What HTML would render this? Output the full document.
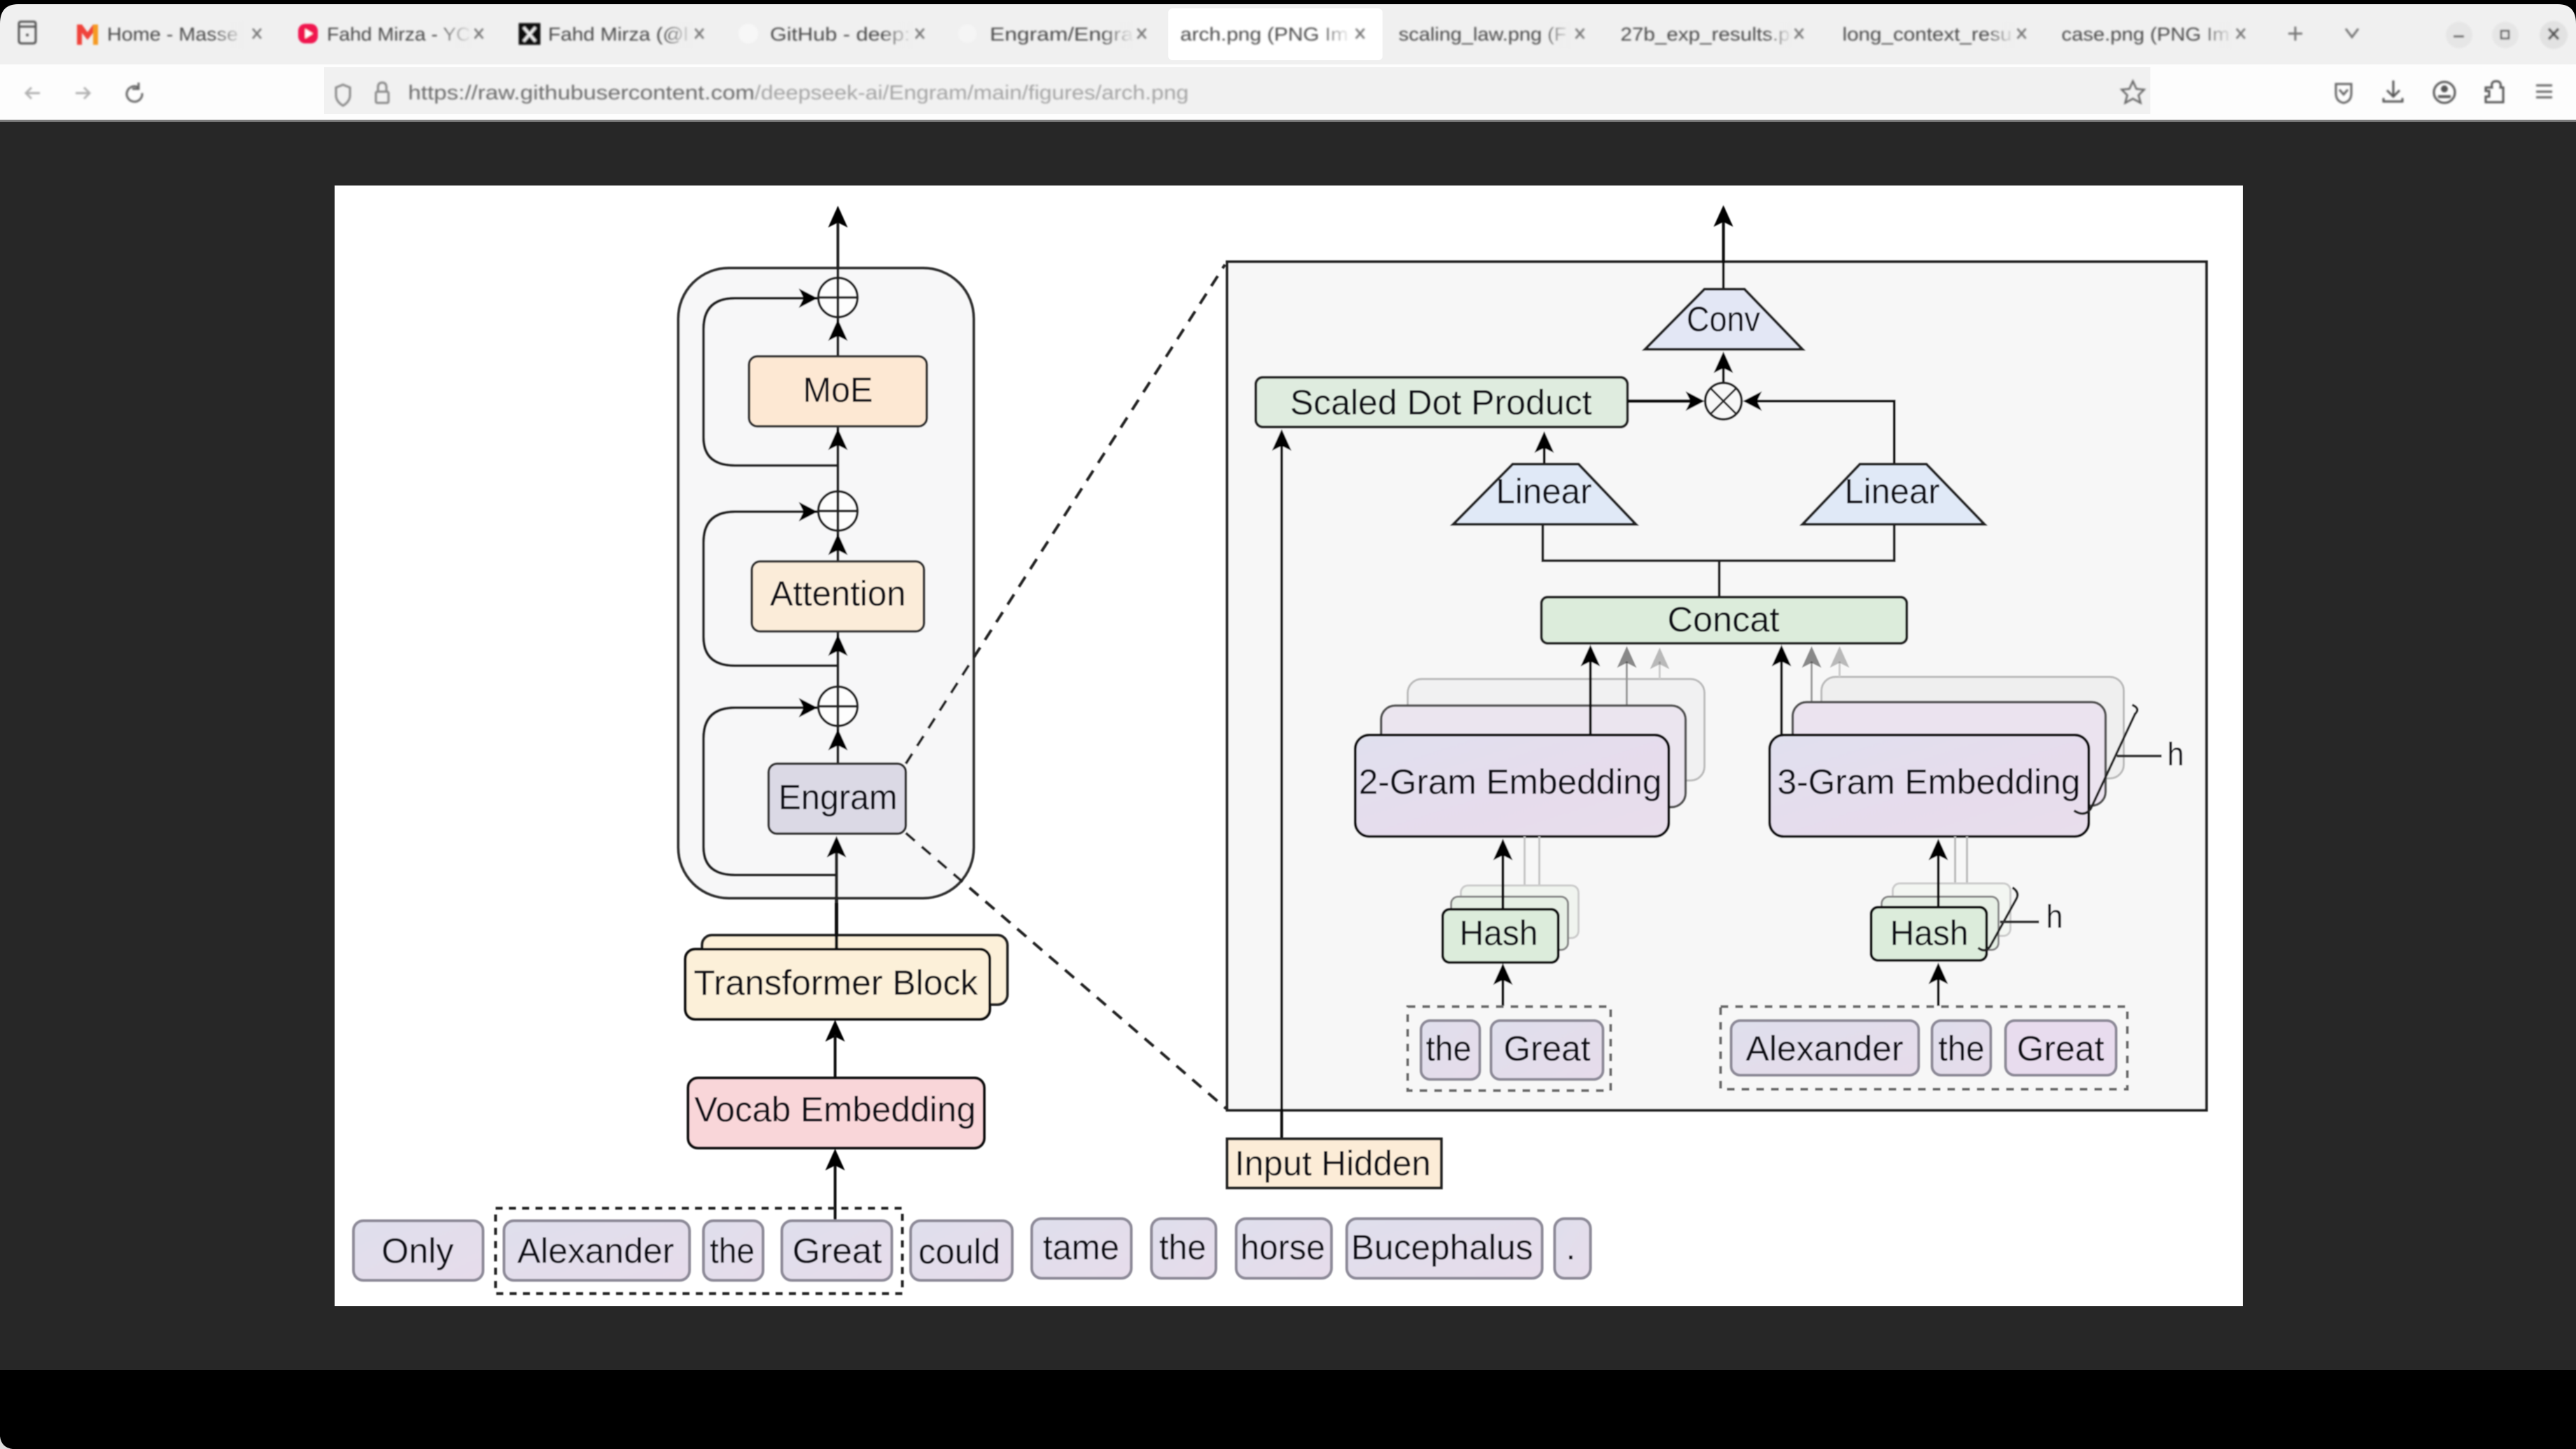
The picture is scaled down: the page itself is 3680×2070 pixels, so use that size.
<!DOCTYPE html>
<html><head><meta charset="utf-8"><title>arch.png</title>
<style>
html,body{margin:0;padding:0;background:#000;width:3680px;height:2070px;overflow:hidden}
svg{display:block}
text{font-family:"Liberation Sans",sans-serif}
.d text{font-size:50px;fill:#0e0e12}
.c text{font-size:27px;fill:#4a4a4a}
</style></head><body>
<svg xmlns="http://www.w3.org/2000/svg" width="3680" height="2070" viewBox="0 0 3680 2070">
<defs>
<path id="u" d="M0 0L-14 31L0 24L14 31Z" fill="#000"/>
<path id="r" d="M0 0L-27 -14L-20 0L-27 14Z" fill="#000"/>
<path id="l" d="M0 0L27 -14L20 0L27 14Z" fill="#000"/>
<linearGradient id="fd"><stop offset="0" stop-color="#efefef" stop-opacity="0"/><stop offset="1" stop-color="#efefef"/></linearGradient>
<linearGradient id="fw"><stop offset="0" stop-color="#fff" stop-opacity="0"/><stop offset="1" stop-color="#fff"/></linearGradient>
<linearGradient id="tk" x1="0" x2="1" y1="0" y2="1"><stop offset="0" stop-color="#dfdfec"/><stop offset="1" stop-color="#e6dcea"/></linearGradient>
<linearGradient id="em" x1="0" x2="1" y1="0" y2="1"><stop offset="0" stop-color="#e0e0ee"/><stop offset=".6" stop-color="#e6dcec"/><stop offset="1" stop-color="#e8deec"/></linearGradient>
<filter id="b1"><feGaussianBlur stdDeviation="1.4"/></filter>
<filter id="b0"><feGaussianBlur stdDeviation="0.9"/></filter>
</defs>

<!-- window -->
<rect width="3680" height="2070" fill="#000"/>
<rect x="0" y="172" width="3680" height="1785" fill="#272727"/>
<path d="M0 2070V2052Q2 2068 18 2070Z" fill="#ddd"/>
<path d="M0 34Q0 6 26 6H3654Q3680 6 3680 34V174H0Z" fill="#f0f0f0"/>
<rect x="0" y="92" width="3680" height="80" fill="#fdfdfd"/>
<rect x="0" y="171" width="3680" height="3" fill="#7c7c7c"/>
<rect x="463" y="96" width="2609" height="67" fill="#f1f1f1"/>
<rect x="1669" y="12" width="306" height="74" rx="6" fill="#fff"/>

<g class="c" filter="url(#b1)">
<!-- tab list icon -->
<path d="M27 38H51V58Q51 62 47 62H31Q27 62 27 58ZM27 38V34Q27 31 30 31H48Q51 31 51 34V38" fill="none" stroke="#555" stroke-width="3"/>
<circle cx="39" cy="50" r="2" fill="#555"/>
<!-- favicons -->
<path d="M110 35H117L125 46L133 35H140V64H133V47L125 57L117 47V64H110Z" fill="#f0433a"/>
<path d="M133 35H140V64H133Z" fill="#f59a23"/>
<rect x="426" y="34" width="28" height="28" rx="10" fill="#f0174f"/><path d="M436 41L447 48L436 55Z" fill="#fff"/>
<rect x="741" y="33" width="31" height="31" fill="#111"/>
<path d="M748 39L765 59M765 39L748 59" stroke="#eee" stroke-width="4"/>
<circle cx="1069" cy="48" r="14" fill="#f7f7f7"/>
<circle cx="1382" cy="48" r="13" fill="#f5f5f5"/>

<text x="153" y="58" textLength="187" lengthAdjust="spacingAndGlyphs">Home - Masse</text>
<text x="467" y="58" textLength="205" lengthAdjust="spacingAndGlyphs">Fahd Mirza - YC</text>
<text x="783" y="58" textLength="200" lengthAdjust="spacingAndGlyphs">Fahd Mirza (@l</text>
<text x="1100" y="58" textLength="200" lengthAdjust="spacingAndGlyphs">GitHub - deep:</text>
<text x="1414" y="58" textLength="205" lengthAdjust="spacingAndGlyphs">Engram/Engra</text>
<text x="1686" y="58" textLength="240" lengthAdjust="spacingAndGlyphs">arch.png (PNG Im</text>
<text x="1998" y="58" textLength="240" lengthAdjust="spacingAndGlyphs">scaling_law.png (F</text>
<text x="2315" y="58" textLength="242" lengthAdjust="spacingAndGlyphs">27b_exp_results.p</text>
<text x="2632" y="58" textLength="242" lengthAdjust="spacingAndGlyphs">long_context_resu</text>
<text x="2945" y="58" textLength="240" lengthAdjust="spacingAndGlyphs">case.png (PNG Im</text>

<rect x="305" y="30" width="45" height="40" fill="url(#fd)"/>
<rect x="625" y="30" width="50" height="40" fill="url(#fd)"/>
<rect x="950" y="30" width="40" height="40" fill="url(#fd)"/>
<rect x="1260" y="30" width="45" height="40" fill="url(#fd)"/>
<rect x="1575" y="30" width="45" height="40" fill="url(#fd)"/>
<rect x="1885" y="30" width="45" height="40" fill="url(#fw)"/>
<rect x="2205" y="30" width="40" height="40" fill="url(#fd)"/>
<rect x="2525" y="30" width="35" height="40" fill="url(#fd)"/>
<rect x="2840" y="30" width="38" height="40" fill="url(#fd)"/>
<rect x="3145" y="30" width="45" height="40" fill="url(#fd)"/>

<g stroke="#777" stroke-width="2.6" fill="none">
<path d="M361 41L373 55M373 41L361 55"/>
<path d="M678 41L690 55M690 41L678 55"/>
<path d="M993 41L1005 55M1005 41L993 55"/>
<path d="M1308 41L1320 55M1320 41L1308 55"/>
<path d="M1625 41L1637 55M1637 41L1625 55"/>
<path d="M1937 41L1949 55M1949 41L1937 55"/>
<path d="M2251 41L2263 55M2263 41L2251 55"/>
<path d="M2564 41L2576 55M2576 41L2564 55"/>
<path d="M2882 41L2894 55M2894 41L2882 55"/>
<path d="M3195 41L3207 55M3207 41L3195 55"/>
<path d="M3279 38V58M3269 48H3289" stroke-width="3"/>
<path d="M3351 41L3360 53L3369 41" stroke-width="3"/>
</g>
<circle cx="3513" cy="50" r="19" fill="#e6e6e6"/>
<circle cx="3579" cy="50" r="19" fill="#e6e6e6"/>
<circle cx="3648" cy="50" r="20" fill="#e2e2e2"/>
<path d="M3505 52H3520" stroke="#555" stroke-width="3" fill="none"/>
<rect x="3573" y="44" width="11" height="11" fill="none" stroke="#555" stroke-width="2.5"/>
<path d="M3641 41L3655 56M3655 41L3641 56" stroke="#555" stroke-width="3.5" fill="none"/>

<!-- nav -->
<g fill="none" stroke="#b0b0b0" stroke-width="3">
<path d="M37 133H57M45 125L37 133L45 141"/>
<path d="M108 133H128M120 125L128 133L120 141"/>
</g>
<path d="M198 125A11 11 0 1 0 203 133M198 118V127H189" fill="none" stroke="#666" stroke-width="3"/>
<path d="M490 121L500 125V136Q500 145 490 151Q480 145 480 136V125Z" fill="none" stroke="#888" stroke-width="3"/>
<rect x="537" y="131" width="18" height="16" rx="2" fill="none" stroke="#888" stroke-width="3"/>
<path d="M540 131V125Q540 118 546 118Q552 118 552 125V131" fill="none" stroke="#888" stroke-width="3"/>
<text x="583" y="142" textLength="495" lengthAdjust="spacingAndGlyphs" style="font-size:29px;fill:#6a6a6a">https://raw.githubusercontent.com</text>
<text x="1078" y="142" textLength="620" lengthAdjust="spacingAndGlyphs" style="font-size:29px;fill:#a4a4a4">/deepseek-ai/Engram/main/figures/arch.png</text>
<path d="M3047 116L3052 127L3063 128L3055 136L3058 147L3047 141L3036 147L3039 136L3031 128L3042 127Z" fill="none" stroke="#666" stroke-width="2.6"/>
<path d="M3337 120H3359V133Q3359 145 3348 147Q3337 145 3337 133ZM3342 128L3348 135L3354 128" fill="none" stroke="#666" stroke-width="3"/>
<path d="M3419 115V137M3410 129L3419 138L3428 129M3405 140V145H3432V140" fill="none" stroke="#555" stroke-width="3"/>
<circle cx="3492" cy="132" r="15" fill="none" stroke="#555" stroke-width="3"/>
<circle cx="3492" cy="127" r="5" fill="#555"/><path d="M3483 138H3501" stroke="#555" stroke-width="4"/>
<path d="M3551 125H3560Q3558 116 3566 116Q3574 116 3572 125H3576V146H3551V138H3556V130H3551Z" fill="none" stroke="#555" stroke-width="3"/>
<path d="M3623 122H3646M3623 131H3646M3623 139H3646" stroke="#666" stroke-width="3"/>
</g>

<!-- image -->
<rect x="478" y="265" width="2726" height="1601" fill="#fff"/>

<g class="d" filter="url(#b0)">
<!-- outer rounded -->
<rect x="969" y="383" width="422" height="900" rx="72" fill="#f7f7f8" stroke="#333" stroke-width="4"/>
<!-- dashed -->
<path d="M1294 1091L1750 378M1294 1190L1752 1584" fill="none" stroke="#222" stroke-width="4" stroke-dasharray="17 13"/>
<!-- loops -->
<g fill="none" stroke="#222" stroke-width="4">
<path d="M1195 665H1050Q1005 665 1005 625V470Q1005 426 1050 426H1168"/>
<path d="M1195 951H1050Q1005 951 1005 910V775Q1005 731 1050 731H1168"/>
<path d="M1195 1250H1050Q1005 1250 1005 1210V1055Q1005 1011 1050 1011H1168"/>
<path d="M1195 1356V1200" stroke-width="4.5"/>
<path d="M1197 1091V300" stroke-width="4"/>
</g>
<use href="#r" x="1168" y="426"/><use href="#r" x="1168" y="731"/><use href="#r" x="1168" y="1011"/>
<!-- circles -->
<g fill="#fff" fill-opacity=".75" stroke="#222" stroke-width="3.5">
<circle cx="1197" cy="425" r="28"/><path d="M1169 425H1225M1197 397V453"/>
<circle cx="1197" cy="730" r="28"/><path d="M1169 730H1225M1197 702V758"/>
<circle cx="1197" cy="1009" r="28"/><path d="M1169 1009H1225M1197 981V1037"/>
</g>
<use href="#u" x="1197" y="294"/><use href="#u" x="1197" y="456"/><use href="#u" x="1197" y="612"/><use href="#u" x="1197" y="762"/><use href="#u" x="1197" y="906"/><use href="#u" x="1197" y="1041"/><use href="#u" x="1195" y="1194"/>
<!-- blocks -->
<rect x="1070" y="509" width="254" height="100" rx="12" fill="#fde8d3" stroke="#333" stroke-width="3.5"/>
<text x="1197" y="574" text-anchor="middle" textLength="100" lengthAdjust="spacingAndGlyphs">MoE</text>
<rect x="1074" y="802" width="246" height="100" rx="12" fill="#fbecd9" stroke="#333" stroke-width="3.5"/>
<text x="1197" y="865" text-anchor="middle" textLength="194" lengthAdjust="spacingAndGlyphs">Attention</text>
<rect x="1098" y="1091" width="196" height="100" rx="12" fill="#dbd9e5" stroke="#333" stroke-width="3.5"/>
<text x="1197" y="1156" text-anchor="middle" textLength="170" lengthAdjust="spacingAndGlyphs">Engram</text>

<rect x="1003" y="1336" width="436" height="99" rx="14" fill="#fcf0d9" stroke="#222" stroke-width="4"/>
<rect x="979" y="1356" width="435" height="100" rx="14" fill="#fcf0d9" stroke="#111" stroke-width="4"/>
<path d="M1195 1356V1290" stroke="#111" stroke-width="4.5"/>
<text x="1194" y="1421" text-anchor="middle" textLength="406" lengthAdjust="spacingAndGlyphs">Transformer Block</text>
<use href="#u" x="1193" y="1457"/><path d="M1193 1540V1478" stroke="#111" stroke-width="4"/>
<rect x="983" y="1540" width="423" height="100" rx="14" fill="#f9d6d9" stroke="#111" stroke-width="4"/>
<text x="1193" y="1602" text-anchor="middle" textLength="402" lengthAdjust="spacingAndGlyphs">Vocab Embedding</text>
<path d="M1193 1743V1662" stroke="#111" stroke-width="4"/><use href="#u" x="1193" y="1641"/>

<!-- tokens -->
<rect x="708" y="1726" width="581" height="122" fill="none" stroke="#222" stroke-width="4" stroke-dasharray="10 9"/>
<g fill="url(#tk)" stroke="#8d8a98" stroke-width="4">
<rect x="505" y="1744" width="185" height="85" rx="14"/>
<rect x="720" y="1744" width="265" height="85" rx="14"/>
<rect x="1005" y="1744" width="85" height="85" rx="14"/>
<rect x="1117" y="1744" width="157" height="85" rx="14"/>
<rect x="1301" y="1744" width="145" height="85" rx="14"/>
<rect x="1474" y="1741" width="142" height="85" rx="14"/>
<rect x="1645" y="1741" width="92" height="85" rx="14"/>
<rect x="1766" y="1741" width="136" height="85" rx="14"/>
<rect x="1924" y="1741" width="279" height="85" rx="14"/>
<rect x="2221" y="1741" width="51" height="85" rx="14"/>
</g>
<text x="545" y="1804" textLength="103" lengthAdjust="spacingAndGlyphs">Only</text>
<text x="739" y="1804" textLength="224" lengthAdjust="spacingAndGlyphs">Alexander</text>
<text x="1014" y="1804" textLength="64" lengthAdjust="spacingAndGlyphs">the</text>
<text x="1132" y="1804" textLength="128" lengthAdjust="spacingAndGlyphs">Great</text>
<text x="1312" y="1805" textLength="117" lengthAdjust="spacingAndGlyphs">could</text>
<text x="1490" y="1799" textLength="109" lengthAdjust="spacingAndGlyphs">tame</text>
<text x="1656" y="1799" textLength="67" lengthAdjust="spacingAndGlyphs">the</text>
<text x="1772" y="1799" textLength="121" lengthAdjust="spacingAndGlyphs">horse</text>
<text x="1930" y="1799" textLength="260" lengthAdjust="spacingAndGlyphs">Bucephalus</text>
<text x="2237" y="1799">.</text>

<!-- right panel -->
<rect x="1753" y="374" width="1399" height="1212" fill="#f7f7f7" stroke="#222" stroke-width="4"/>
<path d="M2462 413V310" stroke="#111" stroke-width="4"/>
<use href="#u" x="2462" y="293"/>
<path d="M2435 413H2492L2575 499H2350Z" fill="#e3e7f5" stroke="#222" stroke-width="4"/>
<text x="2462" y="473" text-anchor="middle" textLength="105" lengthAdjust="spacingAndGlyphs">Conv</text>
<path d="M2462 548V522" stroke="#111" stroke-width="4"/>
<use href="#u" x="2462" y="502"/>
<rect x="1794" y="539" width="531" height="71" rx="10" fill="#dfecdf" stroke="#222" stroke-width="4"/>
<text x="1843" y="592" textLength="431" lengthAdjust="spacingAndGlyphs">Scaled Dot Product</text>
<circle cx="2462" cy="573" r="26" fill="#f7f7f7" stroke="#222" stroke-width="3.5"/>
<path d="M2444 555L2480 591M2480 555L2444 591" stroke="#222" stroke-width="3"/>
<path d="M2325 573H2418" stroke="#111" stroke-width="5"/><use href="#r" x="2435" y="573"/>
<path d="M2510 573H2706V663" fill="none" stroke="#111" stroke-width="4"/><use href="#l" x="2490" y="573"/>
<path d="M2206 663V638" stroke="#111" stroke-width="4"/><use href="#u" x="2206" y="616"/>
<path d="M2161 663H2255L2337 749H2076Z" fill="#e0e9f7" stroke="#222" stroke-width="4"/>
<path d="M2657 663H2752L2835 749H2575Z" fill="#e0e9f7" stroke="#222" stroke-width="4"/>
<text x="2137" y="719" textLength="137" lengthAdjust="spacingAndGlyphs">Linear</text>
<text x="2635" y="719" textLength="136" lengthAdjust="spacingAndGlyphs">Linear</text>
<path d="M2204 749V801H2706V749M2456 801V853" fill="none" stroke="#222" stroke-width="4"/>
<rect x="2202" y="853" width="522" height="66" rx="9" fill="#dcecdb" stroke="#222" stroke-width="4"/>
<text x="2382" y="902" textLength="160" lengthAdjust="spacingAndGlyphs">Concat</text>
<path d="M1831 1627V635" stroke="#111" stroke-width="4"/><use href="#u" x="1831" y="613"/>
<rect x="1753" y="1627" width="306" height="70" fill="#fcecd7" stroke="#222" stroke-width="4"/>
<text x="1764" y="1679" textLength="280" lengthAdjust="spacingAndGlyphs">Input Hidden</text>

<!-- 2-gram -->
<rect x="2011" y="970" width="424" height="145" rx="20" fill="#f1f1f2" stroke="#bbb" stroke-width="3"/>
<path d="M2371 970V945" stroke="#ccc" stroke-width="3"/><use href="#u" x="2371" y="925" opacity=".25"/>
<path d="M2324 1008V945" stroke="#999" stroke-width="3"/><use href="#u" x="2324" y="923" opacity=".45"/>
<rect x="1973" y="1008" width="435" height="145" rx="20" fill="#ebe5ef" stroke="#555" stroke-width="3.5"/>
<path d="M2272 1050V945" stroke="#111" stroke-width="4"/><use href="#u" x="2272" y="921"/>
<rect x="1936" y="1050" width="448" height="145" rx="20" fill="url(#em)" stroke="#111" stroke-width="4"/>
<text x="1941" y="1134" textLength="433" lengthAdjust="spacingAndGlyphs">2-Gram Embedding</text>
<!-- 3-gram -->
<rect x="2602" y="967" width="432" height="145" rx="20" fill="#efefef" stroke="#bbb" stroke-width="3"/>
<path d="M2628 967V945" stroke="#ccc" stroke-width="3"/><use href="#u" x="2628" y="923" opacity=".25"/>
<path d="M2588 1003V945" stroke="#999" stroke-width="3"/><use href="#u" x="2588" y="923" opacity=".45"/>
<rect x="2561" y="1003" width="447" height="148" rx="20" fill="#ebe3ef" stroke="#555" stroke-width="3.5"/>
<path d="M2545 1050V945" stroke="#111" stroke-width="4"/><use href="#u" x="2545" y="921"/>
<rect x="2528" y="1050" width="456" height="145" rx="20" fill="url(#em)" stroke="#111" stroke-width="4"/>
<text x="2539" y="1134" textLength="433" lengthAdjust="spacingAndGlyphs">3-Gram Embedding</text>
<path d="M2963 1158Q2978 1168 2987 1155L3050 1020Q3058 1012 3046 1007" fill="none" stroke="#222" stroke-width="3.5"/>
<path d="M3024 1080H3088" stroke="#333" stroke-width="4"/>
<text x="3096" y="1093" textLength="24" lengthAdjust="spacingAndGlyphs" style="font-size:46px">h</text>
<!-- hash left -->
<path d="M2178 1195V1265M2199 1195V1265" stroke="#c4c4c4" stroke-width="3"/>
<rect x="2087" y="1265" width="168" height="75" rx="10" fill="#f0f4ef" stroke="#ccc" stroke-width="3"/>
<rect x="2073" y="1281" width="167" height="76" rx="10" fill="#e6efe5" stroke="#888" stroke-width="3"/>
<path d="M2147 1299V1220" stroke="#111" stroke-width="4"/><use href="#u" x="2147" y="1198"/>
<rect x="2061" y="1299" width="165" height="76" rx="10" fill="#dcecdb" stroke="#111" stroke-width="4"/>
<text x="2085" y="1350" textLength="112" lengthAdjust="spacingAndGlyphs">Hash</text>
<path d="M2147 1437V1398" stroke="#111" stroke-width="4"/><use href="#u" x="2147" y="1376"/>
<!-- hash right -->
<path d="M2793 1195V1262M2810 1195V1262" stroke="#bbb" stroke-width="3"/>
<rect x="2704" y="1262" width="168" height="75" rx="10" fill="#f3f6f2" stroke="#ccc" stroke-width="3"/>
<rect x="2688" y="1281" width="167" height="76" rx="10" fill="#e6efe5" stroke="#888" stroke-width="3"/>
<path d="M2769 1296V1220" stroke="#111" stroke-width="4"/><use href="#u" x="2769" y="1198"/>
<rect x="2673" y="1296" width="165" height="76" rx="10" fill="#dcecdb" stroke="#111" stroke-width="4"/>
<text x="2700" y="1350" textLength="112" lengthAdjust="spacingAndGlyphs">Hash</text>
<path d="M2826 1354Q2836 1362 2843 1352L2880 1285Q2886 1275 2875 1268" fill="none" stroke="#222" stroke-width="3.5"/>
<path d="M2857 1317H2913" stroke="#333" stroke-width="4"/>
<text x="2923" y="1325" textLength="24" lengthAdjust="spacingAndGlyphs" style="font-size:46px">h</text>
<path d="M2769 1437V1397" stroke="#111" stroke-width="4"/><use href="#u" x="2769" y="1375"/>
<!-- panel tokens -->
<rect x="2011" y="1438" width="290" height="120" fill="none" stroke="#666" stroke-width="4" stroke-dasharray="11 10"/>
<rect x="2458" y="1438" width="581" height="118" fill="none" stroke="#666" stroke-width="4" stroke-dasharray="11 10"/>
<g fill="url(#tk)" stroke="#8d8a98" stroke-width="4">
<rect x="2030" y="1458" width="84" height="84" rx="13"/>
<rect x="2130" y="1458" width="160" height="84" rx="13"/>
<rect x="2473" y="1458" width="268" height="78" rx="13"/>
<rect x="2760" y="1458" width="84" height="78" rx="13"/>
<rect x="2865" y="1458" width="158" height="78" rx="13" fill="#e8dcee"/>
</g>
<text x="2037" y="1515" textLength="65" lengthAdjust="spacingAndGlyphs">the</text>
<text x="2148" y="1515" textLength="124" lengthAdjust="spacingAndGlyphs">Great</text>
<text x="2494" y="1515" textLength="225" lengthAdjust="spacingAndGlyphs">Alexander</text>
<text x="2769" y="1515" textLength="66" lengthAdjust="spacingAndGlyphs">the</text>
<text x="2881" y="1515" textLength="125" lengthAdjust="spacingAndGlyphs">Great</text>
</g>
</svg>
</body></html>
